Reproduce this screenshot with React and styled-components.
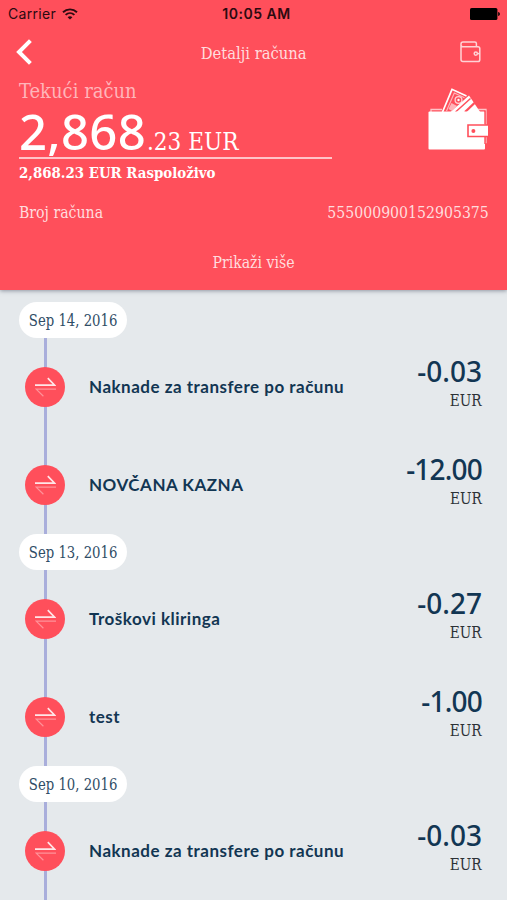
import React from "react";
import styled, { createGlobalStyle } from 'styled-components';

const groups = [
    {
        date: 'Sep 14, 2016',
        items: [
            { title: 'Naknade za transfere po računu', amount: '-0.03' },
            { title: 'NOVČANA KAZNA', amount: '-12.00', tight: true },
        ],
    },
    {
        date: 'Sep 13, 2016',
        items: [
            { title: 'Troškovi kliringa', amount: '-0.27' },
            { title: 'test', amount: '-1.00', tight: true },
        ],
    },
    {
        date: 'Sep 10, 2016',
        items: [
            { title: 'Naknade za transfere po računu', amount: '-0.03' },
        ],
    },
];

const WifiIcon = () => (
    <svg width="16" height="12" viewBox="0 0 16 12" fill="none" stroke="#2b0a10" strokeWidth="1.9">
        <path d="M1 4.2C5 .4 11 .4 15 4.2" />
        <path d="M3.6 6.9C6.2 4.5 9.8 4.5 12.4 6.9" />
        <path d="M8 11.6L5.6 9.2C7 7.9 9 7.9 10.4 9.2Z" fill="#2b0a10" stroke="none" />
    </svg>
);

const BatteryIcon = () => (
    <svg width="30" height="12" viewBox="0 0 30 12" fill="#000">
        <rect x="0" y="0" width="27.4" height="12" rx="1.6" />
        <path d="M28.2 4C30.4 4.4 30.4 7.6 28.2 8Z" />
    </svg>
);

const BackIcon = () => (
    <svg width="16" height="26" viewBox="0 0 16 26" fill="none" stroke="#fff" strokeWidth="4">
        <path d="M14.4 1.6L3 13L14.4 24.4" />
    </svg>
);

const SmallWalletIcon = () => (
    <svg width="21" height="22" viewBox="0 0 21 22" fill="none" stroke="#ffd3d6" strokeWidth="1.5" strokeLinejoin="round">
        <path d="M16.4 5.8V2.6Q16.4 1 14.8 1H3Q1 1 1 3V18.6Q1 20.6 3 20.6H18Q19.8 20.6 19.8 18.8V7.6Q19.8 5.8 18 5.8H3Q1 5.8 1 4" />
        <circle cx="15.8" cy="12.6" r="1.6" />
        <path d="M17.4 12.6H19.8" />
    </svg>
);

const WalletIcon = () => (
    <svg width="61" height="64" viewBox="0 0 61 64">
        <path d="M3 24V21.5H14M49 21.5H58V54.5H55" fill="none" stroke="#ffc4c8" strokeWidth="1.3" />
        <path d="M14 24L24 1.3L41 9.5L52 24Z" fill="#ff4f5b" />
        <path d="M14.5 24L24 1.3L38.5 8" fill="none" stroke="#fff" strokeWidth="1.7" />
        <path d="M18.5 23L26.3 5L36.5 9.8" fill="none" stroke="#ffb5ba" strokeWidth="1.2" />
        <circle cx="30.5" cy="12" r="3.4" fill="none" stroke="#ffd3d6" strokeWidth="1.3" />
        <circle cx="30.5" cy="12" r="1.2" fill="#fff" />
        <path d="M20.5 21L23.5 15L29 18L24 23Z" fill="#ffb5ba" />
        <path d="M22 24.5L41 7.5L52.5 24.5Z" fill="#fff" />
        <path d="M27.5 24L42.5 10.5" stroke="#ff4f5b" strokeWidth="1.5" />
        <path d="M37 24L46.5 15" stroke="#ff4f5b" strokeWidth="2.4" />
        <rect x="0.5" y="23.5" width="56.5" height="38" rx="1" fill="#fff" />
        <path d="M57 22.5V36.5M57 49V56" stroke="#ff4f5b" strokeWidth="1.4" />
        <path d="M60 37H40V48.5H60" fill="#fff" stroke="#ff4f5b" strokeWidth="1.6" />
        <circle cx="45.4" cy="43" r="2" fill="#ff4f5b" />
    </svg>
);

const TransferIcon = () => (
    <svg width="21" height="20" viewBox="0 0 21 20" fill="none" strokeWidth="1.7">
        <path d="M0 8.2H19.6L12.8 1.2" stroke="#ffe6e8" />
        <path d="M21 12.2H1.2L8.4 19.2" stroke="#ff9299" strokeWidth="1.2" />
    </svg>
);

const App = () => {
    return (
        <Screen>
            <GlobalStyle />
            <Header>
                <StatusBar>
                    <Carrier>Carrier <WifiIcon /></Carrier>
                    <Clock>10:05 AM</Clock>
                    <BatteryIcon />
                </StatusBar>
                <NavBar>
                    <BackIcon />
                    <NavTitle $scale={0.965}>Detalji računa</NavTitle>
                    <SmallWalletIcon />
                </NavBar>
                <Account>
                    <Balance>
                        <AccountName $scale={1}>Tekući račun</AccountName>
                        <Total>2,868<Cents>.23 EUR</Cents></Total>
                        <Available $scale={0.99}>2,868.23 EUR Raspoloživo</Available>
                    </Balance>
                    <WalletIcon />
                </Account>
                <NumberRow>
                    <NumberLabel>Broj računa</NumberLabel>
                    <NumberValue>555000900152905375</NumberValue>
                </NumberRow>
                <More>Prikaži više</More>
            </Header>
            <Timeline>
                {groups.map(group => (
                    <Group key={group.date}>
                        <DatePill><DateText $scale={0.92}>{group.date}</DateText></DatePill>
                        {group.items.map(item => (
                            <Row key={item.title}>
                                <Rail><Badge><TransferIcon /></Badge></Rail>
                                <Title>{item.title}</Title>
                                <Price>
                                    <Amount $tight={item.tight}>{item.amount}</Amount>
                                    <Currency $scale={0.95}>EUR</Currency>
                                </Price>
                            </Row>
                        ))}
                    </Group>
                ))}
            </Timeline>
        </Screen>
    )
};

const GlobalStyle = createGlobalStyle`
  body {
    margin: 0;
    background: #e5e9ec;
  }
  * {
    box-sizing: border-box;
  }
`;

const Screen = styled.div`
  width: 507px;
  height: 900px;
  overflow: hidden;
  display: flex;
  flex-direction: column;
  background: #e5e9ec;
`;

const Header = styled.header`
  flex: none;
  height: 290px;
  background: #ff4f5b;
  color: #ffdcde;
  box-shadow: 0 1px 4px rgba(60, 70, 90, 0.5);
  z-index: 1;
`;

const Slab = styled.div`
  font-family: "DejaVu Serif Condensed", "DejaVu Serif", serif;
  font-stretch: condensed;
  white-space: nowrap;
  transform: scaleX(${props => props.$scale || 0.98});
  transform-origin: left center;
`;

const StatusBar = styled.div`
  display: grid;
  grid-template-columns: 1fr auto 1fr;
  align-items: center;
  height: 28px;
  padding: 0 7px 0 8px;
  font-family: Inter, sans-serif;
  font-size: 14px;
  line-height: 18px;
  color: #2b0a10;

  > svg {
    justify-self: end;
  }
`;

const Carrier = styled.div`
  display: flex;
  align-items: center;
  gap: 6px;
  letter-spacing: 0.3px;
  padding-bottom: 1px;
`;

const Clock = styled.div`
  font-weight: 600;
  letter-spacing: 0.5px;
  padding: 0 0 1px 5px;
`;

const NavBar = styled.div`
  display: grid;
  grid-template-columns: 1fr auto 1fr;
  align-items: center;
  height: 48px;
  padding: 0 26px 0 16px;

  > svg:last-child {
    justify-self: end;
  }
`;

const NavTitle = styled(Slab)`
  padding: 2px 0 0 10px;
  font-size: 17px;
  transform-origin: center;
`;

const Account = styled.div`
  display: flex;
  justify-content: space-between;
  align-items: flex-start;
  height: 112px;
  padding: 0 18px 0 19px;

  > svg {
    margin-top: 12px;
  }
`;

const Balance = styled.div`
  width: 313px;
`;

const AccountName = styled(Slab)`
  font-size: 20px;
  line-height: 30px;
  color: #ffb5ba;
`;

const Total = styled.div`
  height: 53px;
  border-bottom: 2px solid #ffc4c8;
  font-family: "Noto Sans", sans-serif;
  font-size: 49px;
  font-weight: 500;
  line-height: 51px;
  letter-spacing: 0.3px;
  color: #fff;
  white-space: nowrap;
`;

const Cents = styled.span`
  display: inline-block;
  margin-left: 1px;
  font-family: "DejaVu Serif Condensed", "DejaVu Serif", serif;
  font-stretch: condensed;
  font-size: 25px;
  line-height: 30px;
  letter-spacing: 0;
  transform: scaleX(0.96);
  transform-origin: left center;
`;

const Available = styled(Slab)`
  font-size: 15px;
  font-weight: bold;
  line-height: 29px;
  color: #fff;
`;

const NumberRow = styled.div`
  display: flex;
  justify-content: space-between;
  padding: 13px 18px 0 19px;
  line-height: 24px;
`;

const NumberLabel = styled(Slab)`
  font-size: 16px;
`;

const NumberValue = styled(Slab)`
  font-size: 16px;
  transform-origin: right center;
`;

const More = styled(Slab)`
  margin-top: 26px;
  font-size: 16px;
  line-height: 24px;
  text-align: center;
  transform-origin: center;
`;

const Timeline = styled.main`
  padding-top: 12px;
`;

const Group = styled.section`
`;

const DatePill = styled.div`
  display: flex;
  align-items: center;
  justify-content: center;
  width: 108px;
  height: 36px;
  margin-left: 19px;
  border-radius: 18px;
  background: #fff;
`;

const DateText = styled(Slab)`
  font-size: 16px;
  color: #2f4d66;
  transform-origin: center;
`;

const Row = styled.div`
  display: flex;
  align-items: center;
  height: 98px;
  padding: 0 25px;
`;

const Rail = styled.div`
  display: flex;
  align-items: center;
  justify-content: center;
  width: 40px;
  height: 100%;
  background: linear-gradient(#a9aedb, #a9aedb) center / 3px 100% no-repeat;
`;

const Badge = styled.div`
  display: flex;
  align-items: center;
  justify-content: center;
  width: 40px;
  height: 40px;
  border-radius: 50%;
  background: #ff4f5b;
`;

const Title = styled.div`
  flex: 1;
  margin-left: 24px;
  padding-bottom: 2px;
  font-family: Lato, sans-serif;
  font-size: 17px;
  font-weight: 700;
  letter-spacing: 0.5px;
  color: #123653;
`;

const Price = styled.div`
  padding-bottom: 8px;
  text-align: right;
`;

const Amount = styled.div`
  font-family: "Noto Sans", sans-serif;
  font-size: 28px;
  font-weight: 500;
  line-height: 34px;
  letter-spacing: ${props => props.$tight ? '-0.8px' : '0'};
  color: #123653;
`;

const Currency = styled(Slab)`
  margin-top: 2px;
  font-size: 16px;
  line-height: 22px;
  color: #2c3136;
  transform-origin: right center;
`;

export default App;
